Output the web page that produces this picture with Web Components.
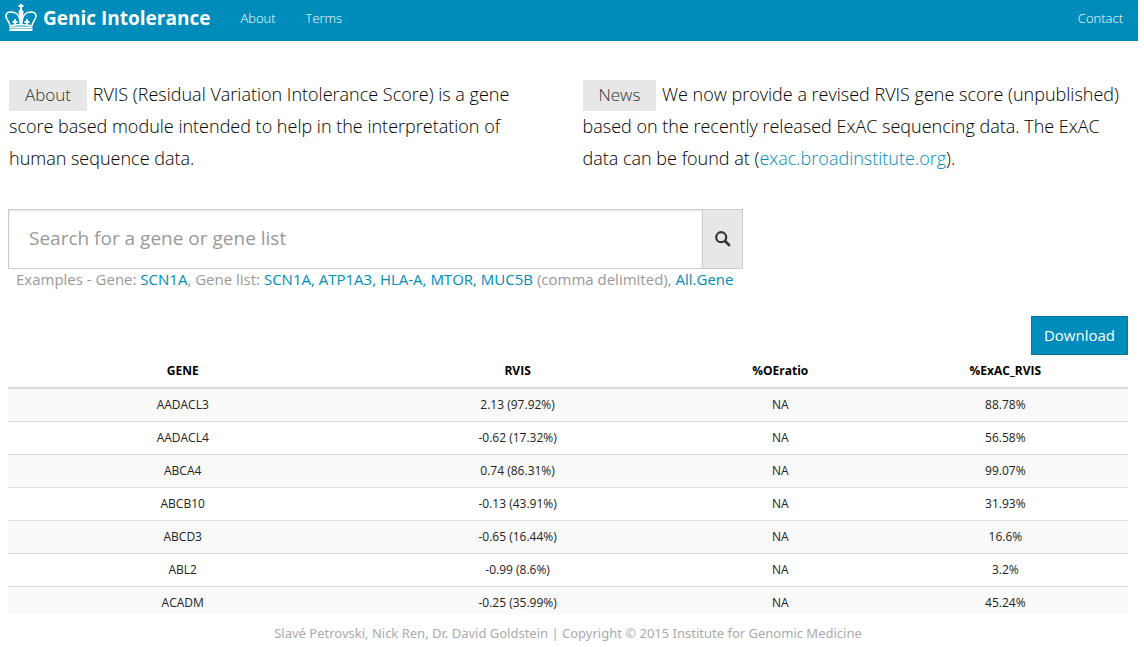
<!DOCTYPE html>
<html lang="en">
<head>
<meta charset="utf-8">
<title>Genic Intolerance</title>
<style>
  html, body { height: 100%; }
  body { margin: 0; background: #fff; color: #222; font-family: "Open Sans", "Noto Sans", sans-serif; }
</style>
</head>
<body>
<genic-app></genic-app>

<template id="app-tpl">
  <style>
    :host { display: flex; flex-direction: column; height: 100vh; padding-right: 6px; box-sizing: border-box; }
    main { flex: 1; min-height: 0; display: flex; flex-direction: column; padding: 37px 10px 0 8px; }
    .intro { display: grid; grid-template-columns: 1fr 1fr; gap: 28px; padding-left: 1px; }
    .actions { display: flex; justify-content: flex-end; margin-top: 27px; }
    .actions button { font: 15px/19px "Open Sans", sans-serif; color: #fff; background: #008cba; border: 1px solid #0079a1; padding: 9px 12px; height: 39px; cursor: pointer; }
    gene-table { flex: 1; min-height: 0; }
    footer { text-align: center; font-family: "Noto Sans", sans-serif; font-size: 13px; line-height: 19px; color: #aaa; padding: 10px 0 4px; margin-right: 2px; }
    a { color: #008cba; text-decoration: none; }
  </style>
  <site-nav></site-nav>
  <main>
    <section class="intro">
      <info-note label="About">RVIS (Residual Variation Intolerance Score) is a gene score based module intended to help in the interpretation of human sequence data.</info-note>
      <info-note label="News">We now provide a revised RVIS gene score (unpublished) based on the recently released ExAC sequencing data. The ExAC data can be found at (<a href="#exac">exac.broadinstitute.org</a>).</info-note>
    </section>
    <gene-search></gene-search>
    <div class="actions"><button type="button">Download</button></div>
    <gene-table></gene-table>
  </main>
  <footer>Slavé Petrovski, Nick Ren, Dr. David Goldstein | Copyright © 2015 Institute for Genomic Medicine</footer>
</template>

<template id="nav-tpl">
  <style>
    :host { display: block; background: #008cba; }
    nav { display: flex; align-items: center; height: 41px; padding: 0 15px 6px 5px; box-sizing: border-box; }
    a { color: #fff; text-decoration: none; font-size: 13px; line-height: 20px; font-weight: 300; }
    .brand { display: flex; align-items: center; gap: 6px; font-size: 19px; line-height: 28px; font-weight: 700; margin-right: 30px; }
    svg { display: block; width: 32px; height: 30px; }
    .terms { margin-left: 30px; }
    .contact { margin-left: auto; }
  </style>
  <nav>
    <a class="brand" href="#home">
      <svg viewBox="0 0 32 30" aria-hidden="true" fill="none" stroke="#fff">
        <path d="M16 .8v6M13.500 3h5" stroke-width="1.800"/>
        <path d="M16 5l2.500 3.500L17.500 22h-3L13.500 8.500z" fill="#fff" stroke="none"/>
        <path d="M5 23C5 18.500 1 17 1 13C1 10.500 3 9 6 9C10.500 9 14.500 12 15 18M27 23C27 18.500 31 17 31 13C31 10.500 29 9 26 9C21.500 9 17.500 12 17 18" stroke-width="1.600"/>
        <path d="M5 22.800Q16 20.800 27 22.800" stroke-width="1.600"/>
        <path d="M10 16v6M7.500 19h5M22 16v6M19.500 19h5" stroke-width="1.800"/>
        <path d="M4.500 24.500h23M4.500 27h23" stroke-width="1.800"/>
      </svg>
      <span>Genic Intolerance</span>
    </a>
    <a href="#about">About</a>
    <a class="terms" href="#terms">Terms</a>
    <a class="contact" href="#contact">Contact</a>
  </nav>
</template>

<template id="note-tpl">
  <style>
    :host { display: block; color: #000; font-size: 18px; font-weight: 300; line-height: 32px; }
    p { margin: 0; }
    .label { display: inline-block; background: #e7e7e7; color: #333; font-size: 17px; line-height: 29px; padding: 0 16px 2px; margin: 0 1px -2px 0; }
  </style>
  <p><span class="label"></span> <slot></slot></p>
</template>

<template id="search-tpl">
  <style>
    :host { display: block; margin-top: 35px; }
    form { display: flex; max-width: 735px; height: 60px; }
    input { flex: 1; min-width: 0; box-sizing: border-box; border: 1px solid #ccc; border-right: 0; border-radius: 0; padding: 0 20px 2px; font: 19px "Open Sans", sans-serif; color: #333; box-shadow: inset 0 1px 2px rgba(0,0,0,.1); }
    input::placeholder { color: #999; opacity: 1; }
    button { width: 41px; padding: 0; border: 1px solid #ccc; background: #e7e7e7; display: grid; place-items: center; }
    svg { width: 16px; height: 16px; display: block; }
    p { margin: 0; padding-left: 8px; font-size: 15px; line-height: 20px; color: #999; }
    a { color: #008cba; text-decoration: none; }
  </style>
  <form>
    <input type="text" aria-label="Gene or gene list" placeholder="Search for a gene or gene list">
    <button type="submit" aria-label="Search">
      <svg viewBox="0 0 16 16" fill="none" stroke="#333" aria-hidden="true"><circle cx="6.200" cy="6.200" r="5" stroke-width="2.200"/><path d="M10 10L14 14" stroke-width="2.800" stroke-linecap="round"/></svg>
    </button>
  </form>
  <p>Examples - Gene: <a href="#SCN1A">SCN1A</a>, Gene list: <a href="#list">SCN1A, ATP1A3, HLA-A, MTOR, MUC5B</a> (comma delimited), <a href="#all">All.Gene</a></p>
</template>

<template id="table-tpl">
  <style>
    :host { display: block; overflow: hidden; }
    table { width: 100%; border-collapse: separate; border-spacing: 0; table-layout: fixed; font-size: 12px; line-height: 16px; text-align: center; }
    th { color: #000; font-weight: 700; padding: 8px; border-bottom: 2px solid #ddd; }
    td { padding: 8px; color: #222; border-bottom: 1px solid #ddd; }
    tbody tr:nth-child(odd) { background: #f9f9f9; }
    col.gene { width: 31.2%; }
    col.rvis { width: 28.6%; }
    col.oe { width: 18.3%; }
  </style>
  <table>
    <colgroup><col class="gene"><col class="rvis"><col class="oe"><col></colgroup>
    <thead><tr><th scope="col">GENE</th><th scope="col">RVIS</th><th scope="col">%OEratio</th><th scope="col">%ExAC_RVIS</th></tr></thead>
    <tbody></tbody>
  </table>
</template>

<script>
  class TemplateElement extends HTMLElement {
    constructor() {
      super();
      const tpl = document.getElementById(this.constructor.template);
      this.attachShadow({ mode: "open" }).append(tpl.content.cloneNode(true));
    }
  }

  class SiteNav extends TemplateElement { static template = "nav-tpl"; }

  class InfoNote extends TemplateElement {
    static template = "note-tpl";
    connectedCallback() {
      this.shadowRoot.querySelector(".label").textContent = this.getAttribute("label");
    }
  }

  class GeneSearch extends TemplateElement {
    static template = "search-tpl";
    connectedCallback() {
      this.shadowRoot.querySelector("form").addEventListener("submit", e => e.preventDefault());
    }
  }

  class GeneTable extends TemplateElement {
    static template = "table-tpl";
    static rows = [
      ["AADACL3", "2.13 (97.92%)", "NA", "88.78%"],
      ["AADACL4", "-0.62 (17.32%)", "NA", "56.58%"],
      ["ABCA4", "0.74 (86.31%)", "NA", "99.07%"],
      ["ABCB10", "-0.13 (43.91%)", "NA", "31.93%"],
      ["ABCD3", "-0.65 (16.44%)", "NA", "16.6%"],
      ["ABL2", "-0.99 (8.6%)", "NA", "3.2%"],
      ["ACADM", "-0.25 (35.99%)", "NA", "45.24%"]
    ];
    connectedCallback() {
      const body = this.shadowRoot.querySelector("tbody");
      body.replaceChildren();
      for (const row of GeneTable.rows) {
        const tr = body.insertRow();
        for (const text of row) tr.insertCell().textContent = text;
      }
    }
  }

  class GenicApp extends TemplateElement { static template = "app-tpl"; }

  customElements.define("site-nav", SiteNav);
  customElements.define("info-note", InfoNote);
  customElements.define("gene-search", GeneSearch);
  customElements.define("gene-table", GeneTable);
  customElements.define("genic-app", GenicApp);
</script>
</body>
</html>
